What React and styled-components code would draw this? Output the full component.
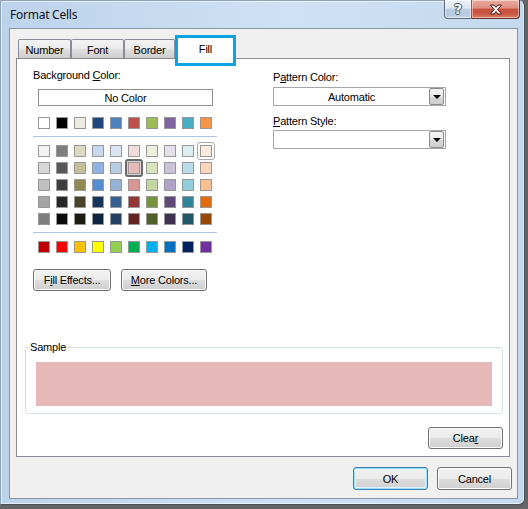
import React from 'react';
import styled, { createGlobalStyle } from 'styled-components';

const GlobalStyle = createGlobalStyle`
  html, body {
    margin: 0;
    padding: 0;
    background: #656565;
  }

  body {
    width: 528px;
    height: 509px;
    overflow: hidden;
    font-family: 'Liberation Sans', Arial, sans-serif;
    font-size: 11px;
    color: #000;
  }
`;

const themeRow = ['#FFFFFF', '#000000', '#EEECE1', '#1F497D', '#4F81BD', '#C0504D', '#9BBB59', '#8064A2', '#4BACC6', '#F79646'];

const tintRows = [
  ['#F2F2F2', '#7F7F7F', '#DDD9C3', '#C6D9F0', '#DBE5F1', '#F2DCDB', '#EBF1DD', '#E5E0EC', '#DBEEF3', '#FDEADA'],
  ['#D8D8D8', '#595959', '#C4BD97', '#8DB3E2', '#B8CCE4', '#E5B9B7', '#D7E3BC', '#CCC1D9', '#B7DDE8', '#FBD5B5'],
  ['#BFBFBF', '#3F3F3F', '#938953', '#548DD4', '#95B3D7', '#D99694', '#C3D69B', '#B2A2C7', '#92CDDC', '#FAC08F'],
  ['#A5A5A5', '#262626', '#494429', '#17365D', '#366092', '#953734', '#76923C', '#5F497A', '#31859B', '#E36C09'],
  ['#7F7F7F', '#0C0C0C', '#1D1B10', '#0F243E', '#244061', '#632423', '#4F6128', '#3F3151', '#205867', '#974806'],
];

const standardRow = ['#C00000', '#FF0000', '#FFC000', '#FFFF00', '#92D050', '#00B050', '#00B0F0', '#0070C0', '#002060', '#7030A0'];

const Window = styled.div`
  width: 525px;
  height: 505px;
  box-sizing: border-box;

  display: flex;
  flex-direction: column;

  border: 1px solid #48525e;
  border-left-color: #8fa4ba;
  border-top-color: #8fa4ba;
  border-radius: 0 6px 6px 0;

  background: linear-gradient(to right, #bcd3ec 0%, #cfe1f4 55%, #c4d9ef 100%);
  box-shadow: inset 0 0 0 1px rgba(255, 255, 255, 0.55);
`;

const TitleBar = styled.div`
  height: 27px;
  flex-shrink: 0;

  display: flex;
  align-items: flex-start;

  padding-left: 9px;
`;

const Title = styled.div`
  margin-top: 6px;

  font-family: 'Noto Sans', 'Open Sans', sans-serif;
  font-size: 12px;
  line-height: 16px;
  letter-spacing: -0.25px;
  color: #111;
`;

const CaptionButtons = styled.div`
  display: flex;

  margin-left: auto;
  margin-right: 4px;
  margin-top: -1px;
`;

const CaptionButton = styled.div`
  width: ${(props) => (props.$close ? '48px' : '28px')};
  height: 19px;
  box-sizing: border-box;

  display: flex;
  align-items: center;
  justify-content: center;

  border: 1px solid ${(props) => (props.$close ? '#6a2e26' : '#5d6b7b')};
  border-top: none;
  border-left-width: ${(props) => (props.$close ? '0' : '1px')};
  border-radius: ${(props) => (props.$close ? '0 0 4px 0' : '0 0 0 4px')};

  background: ${(props) =>
    props.$close
      ? 'linear-gradient(#e9ab9e 0%, #dd8f80 45%, #c8523f 50%, #c9563f 75%, #d9826a 100%)'
      : 'linear-gradient(#eef3f9 0%, #dde7f2 45%, #bccde1 50%, #b6c9de 80%, #cbdaeb 100%)'};
  box-shadow: inset 0 0 0 1px rgba(255, 255, 255, 0.45);
`;

const HelpGlyph = styled.span`
  font-family: 'DejaVu Sans', sans-serif;
  font-weight: bold;
  font-size: 14px;
  line-height: 14px;
  color: #fff;
  text-shadow: -1px 0 #3d4a58, 1px 0 #3d4a58, 0 -1px #3d4a58, 0 1px #3d4a58;
`;

const Client = styled.div`
  margin: 0 6px 5px 8px;
  flex: 1;

  display: flex;
  flex-direction: column;

  padding: 10px 7px 8px 6px;

  background: #f0f0f0;
  border: 1px solid #8896a6;
`;

const TabStrip = styled.div`
  height: 19px;

  display: flex;
  align-items: flex-start;

  margin-left: 2px;
`;

const Tab = styled.div`
  width: ${(props) => props.$w}px;
  height: 19px;
  box-sizing: border-box;

  display: flex;
  justify-content: center;

  padding-top: 4px;

  border: 1px solid #898c95;
  border-bottom: none;
  border-radius: 2px 2px 0 0;

  background: linear-gradient(#f3f3f3 0%, #ebebeb 45%, #dddddd 55%, #cfcfcf 100%);

  line-height: 13px;
  letter-spacing: -0.2px;
`;

const ActiveTab = styled.div`
  width: ${(props) => props.$w}px;
  height: 31px;
  box-sizing: border-box;

  position: relative;
  z-index: 1;

  display: flex;
  justify-content: center;

  margin-top: -4px;
  padding-top: 5px;

  border: 3px solid #0ea2e0;
  background: #fff;

  line-height: 13px;
  letter-spacing: -0.2px;
`;

const Panel = styled.div`
  width: 494px;
  height: 399px;
  box-sizing: border-box;

  display: flex;
  flex-direction: column;

  padding-top: 10px;

  background: #fff;
  border: 1px solid #898c95;
`;

const Columns = styled.div`
  display: flex;
  align-items: flex-start;
`;

const LeftColumn = styled.div`
  width: 184px;
  margin-left: 16px;

  display: flex;
  flex-direction: column;
`;

const RightColumn = styled.div`
  width: 173px;
  margin-left: 56px;
  padding-top: 2px;

  display: flex;
  flex-direction: column;
`;

const Label = styled.div`
  line-height: 13px;
  letter-spacing: -0.2px;
  margin-top: ${(props) => props.$top || 0}px;
  white-space: nowrap;
`;

const NoColorButton = styled.div`
  width: 175px;
  height: 17px;
  box-sizing: border-box;

  margin: 7px 0 0 5px;

  display: flex;
  align-items: center;
  justify-content: center;

  border: 1px solid #8e8e8e;
  background: #fff;

  letter-spacing: -0.2px;
`;

const SwatchRow = styled.div`
  display: flex;
  gap: 6px;

  padding-left: 5px;
  margin-top: ${(props) => props.$top || 0}px;
`;

const SwatchGrid = styled.div`
  display: flex;
  flex-direction: column;
  gap: 5px;

  margin-top: 8px;
`;

const Swatch = styled.div`
  width: 12px;
  height: 12px;
  box-sizing: border-box;

  position: relative;

  border: 1px solid #989898;
  background: ${(props) => props.$color};

  &::after {
    content: '';
    display: ${(props) => (props.$mark ? 'block' : 'none')};

    position: absolute;
    inset: -4px;

    border: ${(props) => (props.$mark === 'selected' ? '2px solid #6b6b6b' : '1px solid #a9a9a9')};
    border-radius: 3px;
    box-shadow: ${(props) => (props.$mark === 'selected' ? 'inset 0 0 0 1px #d6d6d6' : 'none')};
  }
`;

const Separator = styled.div`
  height: 1px;
  width: 184px;

  margin-top: 7px;

  background: #a6c6ea;
`;

const ButtonRow = styled.div`
  display: flex;
  gap: 10px;

  margin-top: 16px;
`;

const Button = styled.div`
  width: ${(props) => props.$w}px;
  height: ${(props) => props.$h || 22}px;
  box-sizing: border-box;

  display: flex;
  align-items: center;
  justify-content: center;

  border: 1px solid ${(props) => (props.$default ? '#3c7fb1' : '#707070')};
  border-radius: 3px;

  background: linear-gradient(#f2f2f2 0%, #ebebeb 50%, #dddddd 51%, #cfcfcf 100%);
  box-shadow: ${(props) =>
    props.$default
      ? 'inset 0 0 0 1px #9ce1fb, inset 0 0 0 2px #dff4fd'
      : 'inset 0 0 0 1px #fcfcfc'};

  letter-spacing: -0.2px;
  white-space: nowrap;
`;

const Dropdown = styled.div`
  width: 173px;
  height: 19px;
  box-sizing: border-box;

  display: flex;

  margin-top: ${(props) => props.$top || 0}px;

  border: 1px solid #a3a6ad;
  background: #fff;
`;

const DropdownValue = styled.div`
  flex: 1;

  display: flex;
  align-items: center;
  justify-content: center;

  letter-spacing: -0.2px;
`;

const DropdownArrow = styled.div`
  width: 15px;
  box-sizing: border-box;

  display: flex;
  align-items: center;
  justify-content: center;

  margin-right: 1px;

  border: 1px solid #8c8c8c;
  border-radius: 2px;
  background: linear-gradient(#f4f4f4 0%, #e9e9e9 50%, #d9d9d9 51%, #cdcdcd 100%);

  &::before {
    content: '';
    width: 0;
    height: 0;

    border-left: 4px solid transparent;
    border-right: 4px solid transparent;
    border-top: 4px solid #000;
  }
`;

const SampleGroup = styled.fieldset`
  margin: 50px 6px 0 8px;
  padding: 0 3px 7px 3px;

  border: 1px solid #d5dfe5;
  border-radius: 3px;
`;

const SampleLegend = styled.legend`
  padding: 0 1px;

  line-height: 13px;
  letter-spacing: -0.2px;
`;

const SampleFill = styled.div`
  height: 44px;
  margin: 8px 7px 0 7px;

  background: ${(props) => props.$color};
`;

const ClearButton = styled(Button)`
  align-self: flex-end;

  margin-top: 13px;
  margin-right: 6px;
`;

const DialogButtons = styled.div`
  display: flex;
  justify-content: flex-end;
  gap: 9px;

  margin-top: 10px;
  margin-right: -2px;
`;

function CloseGlyph() {
  return (
    <svg width="14" height="11" viewBox="0 0 14 11">
      <path
        d="M1.5 1 H5 L7 3.4 L9 1 H12.5 L8.8 5.5 L12.5 10 H9 L7 7.6 L5 10 H1.5 L5.2 5.5 Z"
        fill="#fff"
        stroke="#4a1d17"
        strokeWidth="1"
        strokeLinejoin="round"
      />
    </svg>
  );
}

export default function App() {
  const selected = '#E5B9B7';

  return (
    <>
      <GlobalStyle />
      <Window>
        <TitleBar>
          <Title>Format Cells</Title>
          <CaptionButtons>
            <CaptionButton>
              <HelpGlyph>?</HelpGlyph>
            </CaptionButton>
            <CaptionButton $close>
              <CloseGlyph />
            </CaptionButton>
          </CaptionButtons>
        </TitleBar>

        <Client>
          <TabStrip>
            <Tab $w={53}>Number</Tab>
            <Tab $w={53}>Font</Tab>
            <Tab $w={51}>Border</Tab>
            <ActiveTab $w={61}>Fill</ActiveTab>
          </TabStrip>

          <Panel>
            <Columns>
              <LeftColumn>
                <Label>
                  Background <u>C</u>olor:
                </Label>
                <NoColorButton>No Color</NoColorButton>

                <SwatchRow $top={11}>
                  {themeRow.map((c) => (
                    <Swatch key={c} $color={c} />
                  ))}
                </SwatchRow>

                <Separator />

                <SwatchGrid>
                  {tintRows.map((row, r) => (
                    <SwatchRow key={r}>
                      {row.map((c, i) => (
                        <Swatch
                          key={i}
                          $color={c}
                          $mark={c === selected ? 'selected' : r === 0 && i === 9 ? 'hover' : null}
                        />
                      ))}
                    </SwatchRow>
                  ))}
                </SwatchGrid>

                <Separator />

                <SwatchRow $top={8}>
                  {standardRow.map((c) => (
                    <Swatch key={c} $color={c} />
                  ))}
                </SwatchRow>

                <ButtonRow>
                  <Button $w={78}>
                    F<u>i</u>ll Effects...
                  </Button>
                  <Button $w={86}>
                    <u>M</u>ore Colors...
                  </Button>
                </ButtonRow>
              </LeftColumn>

              <RightColumn>
                <Label>
                  P<u>a</u>ttern Color:
                </Label>
                <Dropdown $top={3}>
                  <DropdownValue>Automatic</DropdownValue>
                  <DropdownArrow />
                </Dropdown>

                <Label $top={9}>
                  <u>P</u>attern Style:
                </Label>
                <Dropdown $top={2}>
                  <DropdownValue />
                  <DropdownArrow />
                </Dropdown>
              </RightColumn>
            </Columns>

            <SampleGroup>
              <SampleLegend>Sample</SampleLegend>
              <SampleFill $color="#E6B8B7" />
            </SampleGroup>

            <ClearButton $w={75}>
              Clea<u>r</u>
            </ClearButton>
          </Panel>

          <DialogButtons>
            <Button $w={75} $h={23} $default>
              OK
            </Button>
            <Button $w={75} $h={23}>
              Cancel
            </Button>
          </DialogButtons>
        </Client>
      </Window>
    </>
  );
}
